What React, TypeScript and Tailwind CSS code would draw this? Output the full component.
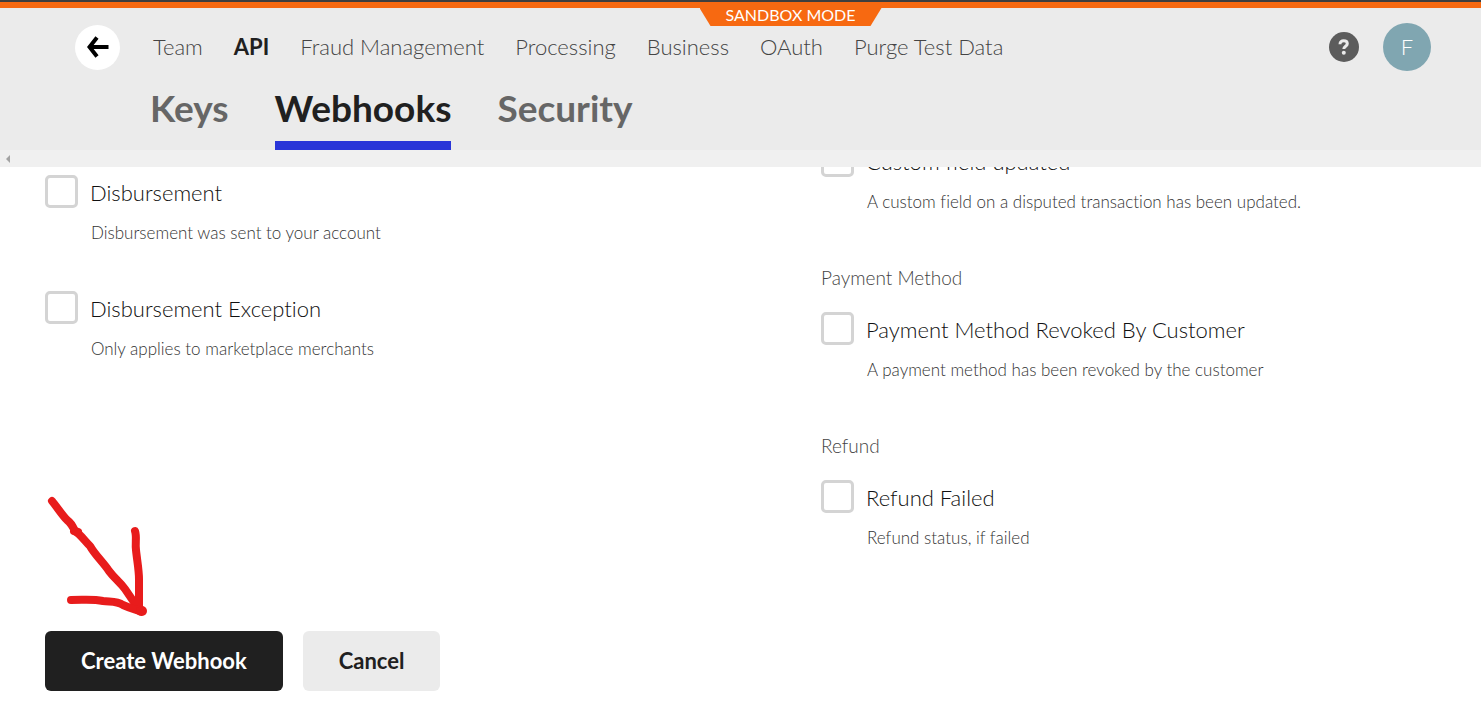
import { useState } from "react";

const NAV_LINKS = [
  "Team",
  "API",
  "Fraud Management",
  "Processing",
  "Business",
  "OAuth",
  "Purge Test Data",
];

const TABS = ["Keys", "Webhooks", "Security"];

interface WebhookOptionProps {
  id: string;
  title: string;
  description: string;
  checked: boolean;
  onToggle: (id: string) => void;
}

function WebhookOption({
  id,
  title,
  description,
  checked,
  onToggle,
}: WebhookOptionProps) {
  return (
    <div>
      <div className="flex h-[33px] items-center gap-3">
        <input
          id={id}
          type="checkbox"
          checked={checked}
          onChange={() => onToggle(id)}
          aria-describedby={`${id}-description`}
          className="size-[33px] shrink-0 appearance-none rounded-[5px] border-3 border-[#d4d4d4] bg-white checked:bg-[#2935d8]"
        />
        <label
          htmlFor={id}
          className="pt-0.5 text-[22px] leading-8 font-light text-[#101010]"
        >
          {title}
        </label>
      </div>
      <p
        id={`${id}-description`}
        className="mt-[13px] pl-[46px] text-[17px] leading-6 font-light text-[#333333]"
      >
        {description}
      </p>
    </div>
  );
}

function SectionTitle({ children }: { children: string }) {
  return (
    <h3 className="mt-[52px] mb-[22px] text-[19px] leading-6 font-light text-[#444444]">
      {children}
    </h3>
  );
}

function Header() {
  return (
    <header className="h-[150px] bg-[#ebebeb]">
      <div className="h-2 border-t-2 border-[#3f3f3f] bg-[#f76911]" />
      <div className="relative flex h-[142px] flex-col justify-between">
        <div className="absolute top-0 left-1/2 flex h-[18px] w-[182px] -translate-x-[41px] items-center justify-center bg-[#f76911] pb-1 text-base leading-4 text-white [clip-path:polygon(0_0,100%_0,calc(100%-11px)_100%,11px_100%)]">
          SANDBOX MODE
        </div>
        <div className="flex items-center pt-[15px] pr-[50px] pl-[75px]">
          <button
            type="button"
            aria-label="Back"
            className="mr-[33px] flex size-[45px] items-center justify-center rounded-full bg-white"
          >
            <svg width="22" height="22" viewBox="0 0 22 22" aria-hidden="true">
              <path
                d="M10 1.5 2.500 11l7.500 9.500M2 11h19.500"
                fill="none"
                stroke="#000"
                strokeWidth="4"
              />
            </svg>
          </button>
          <nav className="flex gap-[31px] text-[22px] leading-8 font-light text-[#444444]">
            {NAV_LINKS.map((link) => (
              <a
                key={link}
                href="#"
                className={link === "API" ? "font-bold text-[#202020]" : ""}
              >
                {link}
              </a>
            ))}
          </nav>
          <button
            type="button"
            aria-label="Help"
            className="ml-auto flex size-[30px] items-center justify-center rounded-full bg-[#5c5c5c]"
          >
            <svg width="12" height="16" viewBox="0 0 12 16" aria-hidden="true">
              <path
                d="M2 5.200C2 2.800 3.600 1.800 5.600 1.800c2.200 0 3.700 1 3.700 2.900 0 2.500-3.500 2.600-3.500 5.300"
                fill="none"
                stroke="#ebebeb"
                strokeWidth="3"
              />
              <circle cx="5.800" cy="13.700" r="2" fill="#ebebeb" />
            </svg>
          </button>
          <button
            type="button"
            aria-label="Account"
            className="ml-6 size-12 rounded-full bg-[#80a6b1] pb-0.5 text-[22px] font-light text-white"
          >
            F
          </button>
        </div>
        <nav className="flex gap-[46px] pl-[150px] text-[37px] leading-[48px] font-bold text-[#666666]">
          {TABS.map((tab) => (
            <a
              key={tab}
              href="#"
              className={
                tab === "Webhooks"
                  ? "border-b-9 border-[#2935d8] pb-[9px] text-[#202020]"
                  : "pb-[18px]"
              }
            >
              {tab}
            </a>
          ))}
        </nav>
      </div>
    </header>
  );
}

export default function App() {
  const [selected, setSelected] = useState<string[]>([]);

  const toggle = (id: string) => {
    setSelected((prev) =>
      prev.includes(id) ? prev.filter((item) => item !== id) : [...prev, id],
    );
  };

  const optionProps = (id: string) => ({
    id,
    checked: selected.includes(id),
    onToggle: toggle,
  });

  return (
    <div className="min-h-screen bg-white font-[Lato,sans-serif] [font-variant-ligatures:no-common-ligatures]">
      <Header />
      <div className="flex h-[17px] items-center bg-[#f0f0f0] pl-[6px]">
        <svg width="4" height="8" viewBox="0 0 4 8" aria-hidden="true">
          <path d="M4 0v8L0 4z" fill="#a3a3a3" />
        </svg>
      </div>
      <main className="overflow-hidden pr-11 pb-9 pl-[45px]">
        <form onSubmit={(e) => e.preventDefault()}>
          <div className="grid grid-cols-2 gap-40">
            <div className="flex flex-col gap-[46px] pt-2">
              <WebhookOption
                {...optionProps("disbursement")}
                title="Disbursement"
                description="Disbursement was sent to your account"
              />
              <WebhookOption
                {...optionProps("disbursement-exception")}
                title="Disbursement Exception"
                description="Only applies to marketplace merchants"
              />
            </div>
            {/* scrolled a little, so the first option slides under the bar */}
            <div className="-mt-[23px]">
              <WebhookOption
                {...optionProps("custom-field-updated")}
                title="Custom field updated"
                description="A custom field on a disputed transaction has been updated."
              />
              <SectionTitle>Payment Method</SectionTitle>
              <WebhookOption
                {...optionProps("payment-method-revoked")}
                title="Payment Method Revoked By Customer"
                description="A payment method has been revoked by the customer"
              />
              <SectionTitle>Refund</SectionTitle>
              <WebhookOption
                {...optionProps("refund-failed")}
                title="Refund Failed"
                description="Refund status, if failed"
              />
            </div>
          </div>
          <div className="relative mt-[81px] flex gap-5 text-[22px] leading-7 font-bold">
            <svg
              className="pointer-events-none absolute -top-[135px] left-0"
              width="105"
              height="125"
              viewBox="0 0 105 125"
              fill="none"
              stroke="#e81c1c"
              strokeWidth="8"
              strokeLinecap="round"
              strokeLinejoin="round"
              aria-hidden="true"
            >
              <path d="M7 5c5 6 10 14 15 19 4 3 5 5 8 11 5 3 10 10 15 15 5 9 13 16 19 25 6 8 11 11 16 18l15 22" />
              <path d="M29 35l4 1" />
              <path d="M90 35c2 6 0 12 1 19 1 10 3 20 3 29v28" />
              <path d="M26 104c15 0 22-1 32 1 8 1 14 0 20 4 7 3 12 5 18 6" />
              <path d="M96 115h1" strokeWidth="10" />
            </svg>
            <button
              type="submit"
              className="h-[60px] rounded-md bg-[#202020] px-9 text-white"
            >
              Create Webhook
            </button>
            <button
              type="button"
              onClick={() => setSelected([])}
              className="h-[60px] rounded-md bg-[#ebebeb] px-9 text-[#202020]"
            >
              Cancel
            </button>
          </div>
        </form>
      </main>
    </div>
  );
}
